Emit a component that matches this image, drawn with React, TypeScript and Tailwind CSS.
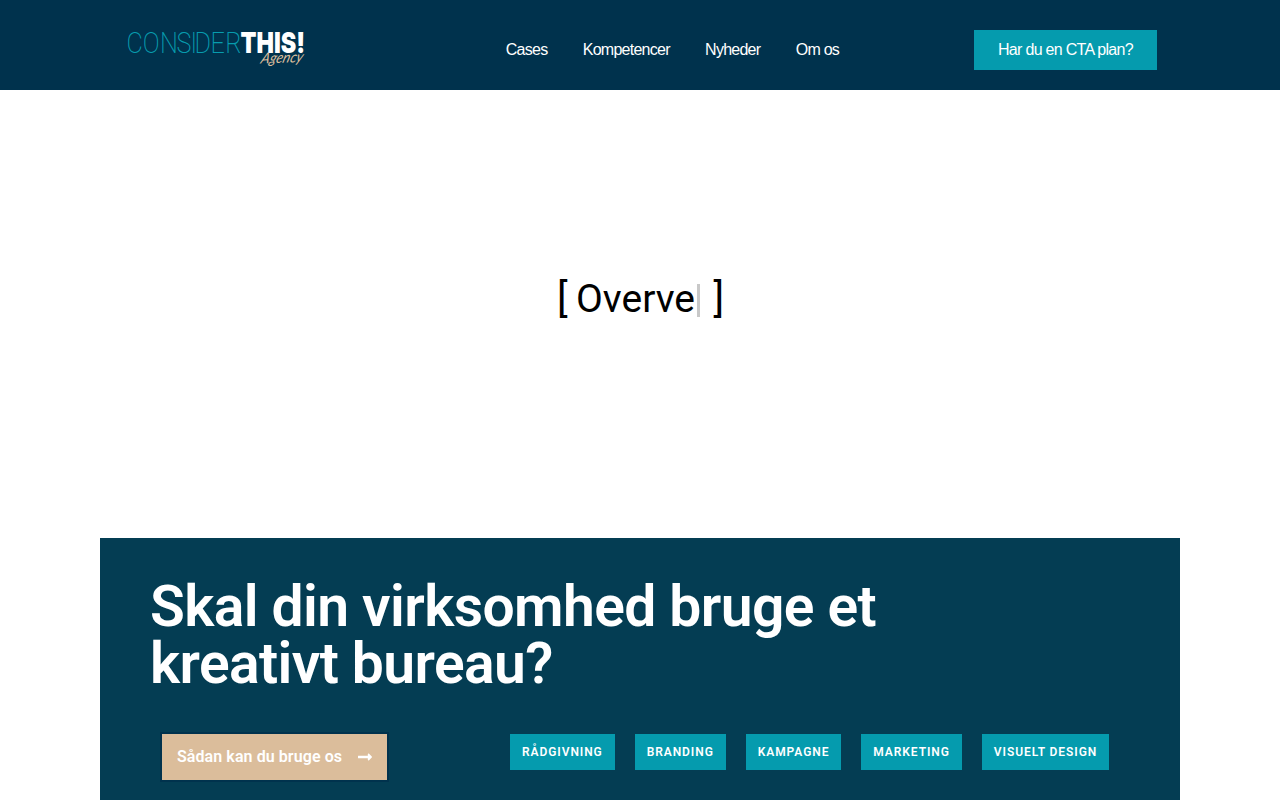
import React from 'react';

const navItems = ['Cases', 'Kompetencer', 'Nyheder', 'Om os'];

const services = ['RÅDGIVNING', 'BRANDING', 'KAMPAGNE', 'MARKETING', 'VISUELT DESIGN'];

const Logo: React.FC = () => (
  <svg width="180" height="46" viewBox="0 0 180 46" className="overflow-visible tracking-normal" aria-label="Consider This! Agency">
    <text x="-0.5 18.7 39.3 59 75.5 80.5 99.5 117" y="25" transform="scale(0.84 1)" fontFamily="Roboto, sans-serif" fontWeight="200" fontSize="30" fill="#079cae">
      CONSIDER
    </text>
    <text x="113.5" y="25" fontFamily="Inter, sans-serif" fontWeight="900" fontSize="29" fill="#ffffff" textLength="64.5" lengthAdjust="spacingAndGlyphs">
      THIS!
    </text>
    <text transform="translate(133 35.5) rotate(-2) skewX(-18)" fontFamily="Lato, sans-serif" fontStyle="italic" fontWeight="400" fontSize="15" fill="#dcbf9d" textLength="42" lengthAdjust="spacingAndGlyphs">
      Agency
    </text>
  </svg>
);

const ArrowIcon: React.FC = () => (
  <svg width="14" height="16" viewBox="0 0 448 512" fill="currentColor">
    <path d="M313.941 216H12c-6.627 0-12 5.373-12 12v56c0 6.627 5.373 12 12 12h301.941v46.059c0 21.382 25.851 32.09 40.971 16.971l86.059-86.059c9.373-9.373 9.373-24.569 0-33.941l-86.059-86.059c-15.119-15.119-40.971-4.411-40.971 16.971V216z" />
  </svg>
);

const Header: React.FC = () => (
  <header className="flex h-[90px] bg-[#00324d] pl-[127px] font-['Liberation_Sans',sans-serif] text-base tracking-[-0.8px] text-white">
    <a href="#" className="w-[378.8px] shrink-0 pt-7">
      <Logo />
    </a>
    <nav className="flex w-[468.2px] shrink-0 gap-[35.4px] pt-[38px] leading-6 tracking-[-0.75px]">
      {navItems.map(item => (
        <a key={item} href="#" className="whitespace-nowrap">{item}</a>
      ))}
    </nav>
    <a href="#" className="mt-[30px] flex h-10 w-[183px] items-center justify-center whitespace-nowrap bg-[#059bae] tracking-[-0.7px]">
      Har du en CTA plan?
    </a>
  </header>
);

const Hero: React.FC = () => (
  <section className="flex h-[448px] items-start justify-center bg-white pt-[185px] text-black">
    <h1 className="flex w-[166px] text-[40px] leading-[48px] whitespace-nowrap">
      <span className="w-[19px]">[</span>
      <span className="w-[121px] text-[39px]">Overve</span>
      <span className="mt-[9px] h-[33px] w-[3px] bg-[#c8c8c8]" />
      <span className="-mr-px ml-auto">]</span>
    </h1>
  </section>
);

const CallToAction: React.FC = () => (
  <section className="mx-auto h-[262px] w-[1080px] bg-[#043d53] px-[50px] pt-10 text-white">
    <h2 className="w-[800px] text-[57px] leading-[57px] font-semibold tracking-[-0.59px]">
      Skal din virksomhed bruge et kreativt bureau?
    </h2>
    <div className="flex items-start pt-[40px]">
      <a href="#" className="ml-[10px] flex h-[50px] w-[229px] shrink-0 items-center justify-between border-2 border-[#00324d] bg-[#dbbd9b] px-[15px] font-semibold tracking-[0.08px] whitespace-nowrap">
        Sådan kan du bruge os
        <ArrowIcon />
      </a>
      <ul className="ml-[121px] flex gap-5 pt-0.5">
        {services.map(service => (
          <li key={service} className="flex h-9 items-center bg-[#059bae] px-3 text-xs font-semibold tracking-[0.92px] whitespace-nowrap">
            {service}
          </li>
        ))}
      </ul>
    </div>
  </section>
);

const App: React.FC = () => {
  return (
    <div className="h-[800px] w-[1280px] overflow-hidden bg-white font-[Roboto,sans-serif]">
      <Header />
      <main>
        <Hero />
        <CallToAction />
      </main>
    </div>
  );
};

export default App;
